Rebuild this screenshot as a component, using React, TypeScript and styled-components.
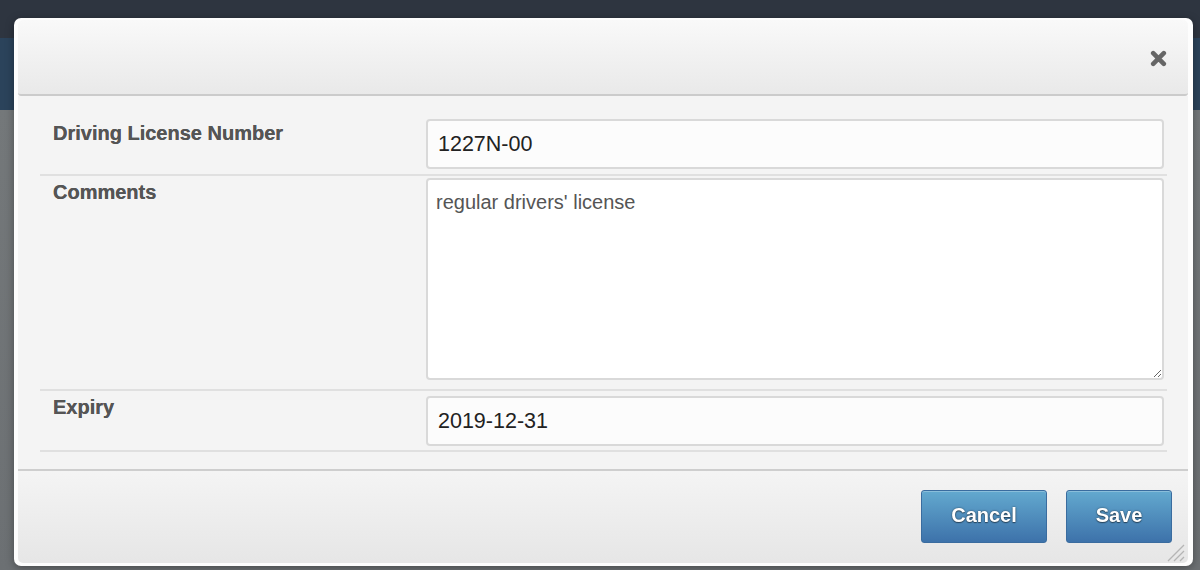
import React from "react";
import styled, { createGlobalStyle } from "styled-components";

const GlobalStyle = createGlobalStyle`
  html, body { margin: 0; padding: 0; }
  body {
    width: 1200px;
    height: 570px;
    overflow: hidden;
    font-family: "Liberation Sans", Arial, sans-serif;
  }
  * { box-sizing: border-box; }
`;

const Page = styled.div`
  width: 1200px;
  height: 570px;
  display: flex;
  flex-direction: column;
  background: #6e7275;
`;

const TopBar = styled.div`
  height: 38px;
  background: #2e3540;
`;

const Band = styled.div`
  height: 72px;
  background: #2b435b;
`;

const Rest = styled.div`
  flex: 1;
  background: linear-gradient(180deg, #74787a 0%, #6c7073 100%);
`;

const Overlay = styled.div`
  position: fixed;
  inset: 0;
  padding: 18px 7px 4px 14px;
  display: flex;
`;

const Dialog = styled.div`
  position: relative;
  flex: 1;
  display: flex;
  flex-direction: column;
  background: #fdfdfd;
  border-radius: 7px;
  padding: 2px 5px 3px 4px;
  box-shadow: 0 2px 8px rgba(0, 0, 0, 0.35);
`;

const Header = styled.div`
  height: 76px;
  display: flex;
  align-items: center;
  justify-content: flex-end;
  padding: 3px 21px 0 0;
  background: linear-gradient(180deg, #f9f9f9 0%, #e9e9e9 100%);
  border-bottom: 2px solid #cbcbcb;
  border-radius: 5px 5px 3px 3px;
`;

const CloseButton = styled.button`
  border: none;
  background: none;
  padding: 0;
  width: 17px;
  height: 17px;
  display: flex;
  cursor: pointer;
  filter: blur(0.4px);
`;

const Body = styled.div`
  flex: 1;
  background: #f4f4f4;
  padding: 21px 21px 0 22px;
`;

const Row = styled.div`
  display: flex;
  align-items: flex-start;
  border-bottom: 2px solid #e0e0e0;
`;

const Label = styled.div`
  width: 386px;
  flex: none;
  padding: 4px 0 0 13px;
  font-size: 20px;
  line-height: 24px;
  font-weight: bold;
  color: #555555;
  text-shadow: 0 0 0.4px #555555;
`;

const Field = styled.div<{ $top: number; $bottom: number }>`
  flex: 1;
  display: flex;
  padding: ${(p) => p.$top}px 3px ${(p) => p.$bottom}px 0;
`;

const TextInput = styled.input`
  width: 100%;
  height: 50px;
  border: 2px solid #d9d9d9;
  border-radius: 4px;
  background: #fcfcfc;
  padding: 0 10px;
  font-family: "Liberation Sans", Arial, sans-serif;
  font-size: 21.5px;
  color: #222222;
  outline: none;
`;

const TextArea = styled.textarea`
  width: 100%;
  height: 202px;
  display: block;
  border: 2px solid #d9d9d9;
  border-radius: 4px;
  background: #ffffff;
  padding: 11px 8px;
  font-family: "Liberation Sans", Arial, sans-serif;
  font-size: 20px;
  line-height: 23px;
  color: #555555;
  outline: none;
  resize: vertical;
`;

const Footer = styled.div`
  display: flex;
  justify-content: flex-end;
  gap: 19px;
  padding: 19px 16px 20px 0;
  background: linear-gradient(180deg, #f4f4f4 0%, #e6e6e6 100%);
  border-top: 2px solid #cecece;
  border-radius: 0 0 5px 5px;
`;

const Button = styled.button<{ $width: number }>`
  width: ${(p) => p.$width}px;
  height: 53px;
  border: 1px solid #3a6c9f;
  border-radius: 3px;
  background: linear-gradient(180deg, #63a9cf 0%, #3d72aa 100%);
  box-shadow: inset 0 1px 0 rgba(255, 255, 255, 0.25);
  font-family: "Liberation Sans", Arial, sans-serif;
  font-size: 20px;
  font-weight: bold;
  color: #ffffff;
  text-shadow: 0 0 2px rgba(0, 0, 0, 0.55), 0 1px 1px rgba(0, 0, 0, 0.4);
  padding: 0 0 3px;
  cursor: pointer;
`;

const Grip = styled.svg`
  position: absolute;
  right: 8px;
  bottom: 4px;
  width: 22px;
  height: 22px;
`;

export default function App() {
  return (
    <>
      <GlobalStyle />
      <Page>
        <TopBar />
        <Band />
        <Rest />
      </Page>
      <Overlay>
        <Dialog>
          <Header>
            <CloseButton aria-label="Close">
              <svg width="17" height="17" viewBox="0 0 17 17">
                <path
                  d="M3.2 3.2 L13.8 13.8 M13.8 3.2 L3.2 13.8"
                  stroke="#666"
                  strokeWidth="4.6"
                  strokeLinecap="round"
                />
              </svg>
            </CloseButton>
          </Header>
          <Body>
            <Row>
              <Label>Driving License Number</Label>
              <Field $top={2} $bottom={5}>
                <TextInput defaultValue="1227N-00" />
              </Field>
            </Row>
            <Row>
              <Label>Comments</Label>
              <Field $top={2} $bottom={9}>
                <TextArea defaultValue="regular drivers' license" />
              </Field>
            </Row>
            <Row>
              <Label>Expiry</Label>
              <Field $top={5} $bottom={4}>
                <TextInput defaultValue="2019-12-31" />
              </Field>
            </Row>
          </Body>
          <Footer>
            <Button $width={126}>Cancel</Button>
            <Button $width={106}>Save</Button>
          </Footer>
          <Grip viewBox="0 0 22 22">
            <path
              d="M21 5 L5 21 M21 11 L11 21 M21 17 L17 21"
              stroke="#b5b5b5"
              strokeWidth="1.3"
            />
          </Grip>
        </Dialog>
      </Overlay>
    </>
  );
}
